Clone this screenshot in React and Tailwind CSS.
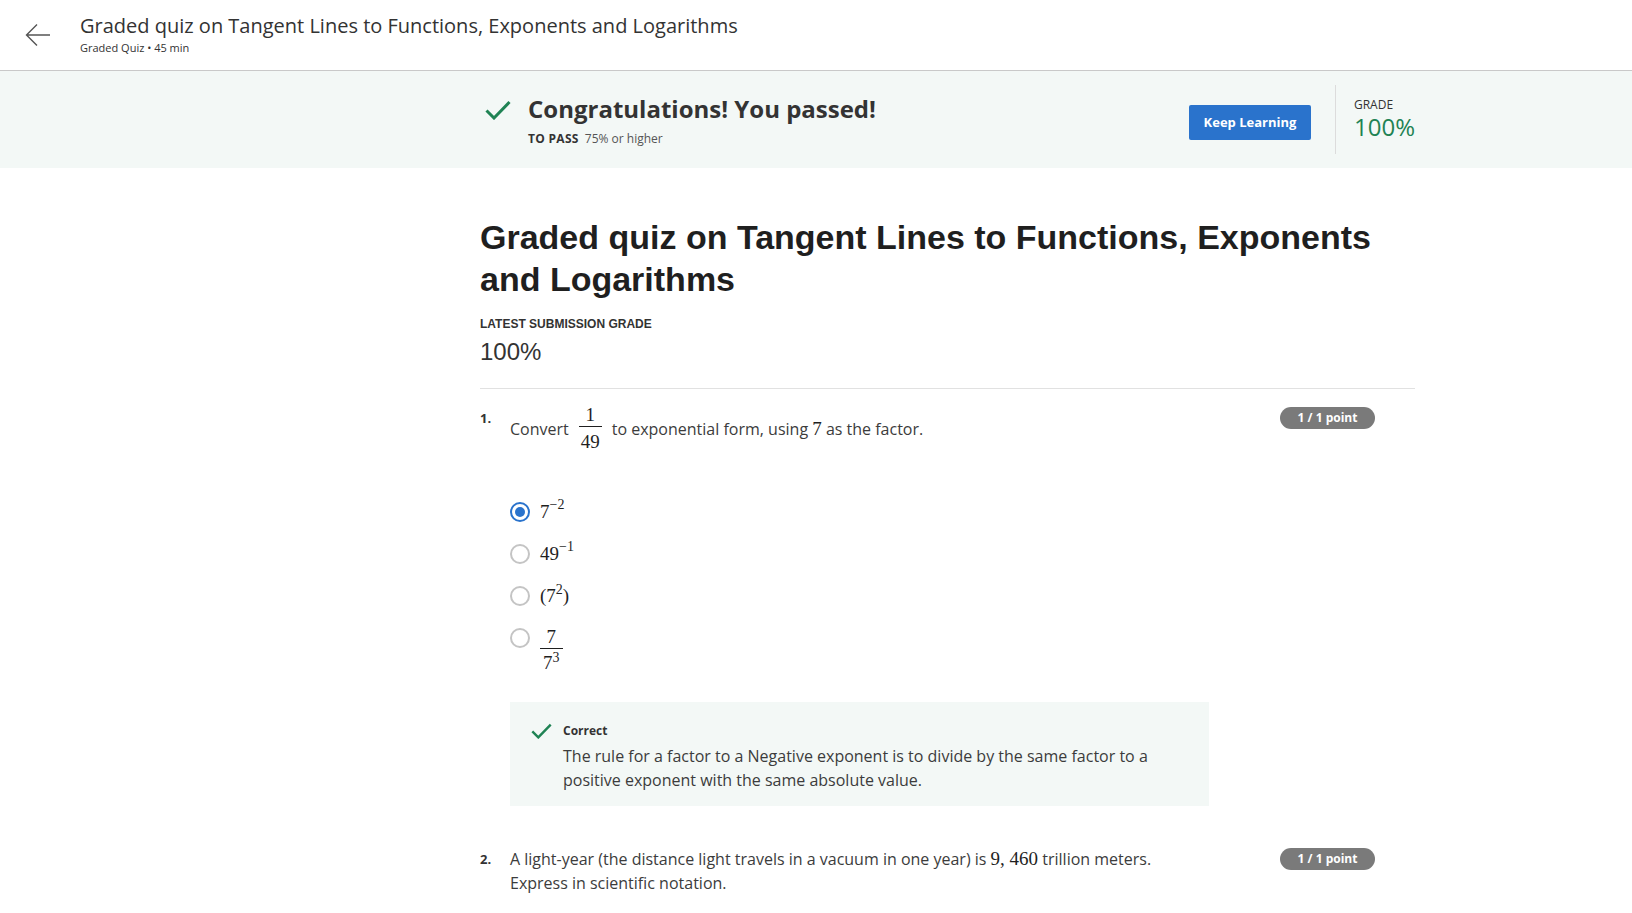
import React from 'react';

const sans = { fontFamily: '"Open Sans", "Noto Sans", sans-serif' };

const Frac = ({ top, bottom }) => (
  <span className="inline-flex flex-col items-center font-['Liberation_Serif',serif] text-[19px] leading-[22px] text-[#1f1f1f] mx-[10px]">
    <span className="px-[2px]">{top}</span>
    <span className="px-[2px] border-t border-[#1f1f1f] pt-[4px]">{bottom}</span>
  </span>
);

const Math = ({ children }) => (
  <span className="font-['Liberation_Serif',serif] text-[19px] leading-[20px] text-[#1f1f1f]">{children}</span>
);

const Badge = () => (
  <span className="h-[22px] w-[95px] rounded-full bg-[#7a7a7a] text-white text-[12px] font-bold flex items-center justify-center shrink-0">
    1 / 1 point
  </span>
);

const Radio = ({ checked }) =>
  checked ? (
    <span className="w-[20px] h-[20px] rounded-full border-2 border-[#2a73cc] flex items-center justify-center shrink-0">
      <span className="w-[10px] h-[10px] rounded-full bg-[#2a73cc]" />
    </span>
  ) : (
    <span className="w-[20px] h-[20px] rounded-full border-2 border-[#c4c4c4] shrink-0" />
  );

const Check = ({ className }) => (
  <svg viewBox="0 0 26 20" className={className} fill="none" stroke="#1f8354" strokeWidth="3">
    <path d="M1.5 10.5 L9 18 L24.5 2" />
  </svg>
);

const options = [
  { checked: true, body: <Math>7<sup className="text-[14px] -top-[9px]">−2</sup></Math> },
  { body: <Math>49<sup className="text-[14px] -top-[9px]">−1</sup></Math> },
  { body: <Math>(7<sup className="text-[14px] -top-[8px]">2</sup>)</Math> },
  {
    body: (
      <span className="mt-[24px] inline-flex flex-col items-center font-['Liberation_Serif',serif] text-[19px] leading-[22px] text-[#1f1f1f]">
        <span className="px-[3px]">7</span>
        <span className="px-[3px] border-t-[1.5px] border-[#1f1f1f] pt-[3px]">7<sup className="text-[14px] -top-[7px]">3</sup></span>
      </span>
    ),
  },
];

export default function App() {
  return (
    <div className="min-h-screen bg-white text-[#333]" style={sans}>
      {/* top bar */}
      <div className="h-[71px] border-b border-[#c9c9c9] flex items-start">
        <div className="pl-[25px] pt-[23px] w-[80px] shrink-0">
          <svg viewBox="0 0 26 24" className="w-[26px] h-[24px]" fill="none" stroke="#555" strokeWidth="1.4">
            <path d="M25 12 H2 M12 1.5 L1.5 12 L12 22.5" />
          </svg>
        </div>
        <div className="pt-[12px]">
          <div className="text-[20px] leading-[28px] text-[#333]">
            Graded quiz on Tangent Lines to Functions, Exponents and Logarithms
          </div>
          <div className="text-[11px] leading-[16px] text-[#333]">Graded Quiz • 45 min</div>
        </div>
      </div>

      {/* result banner */}
      <div className="h-[97px] bg-[#f3f8f6]">
        <div className="ml-[480px] w-[935px] h-full flex items-center">
          <div className="flex items-start pt-[2px]">
            <Check className="w-[26px] h-[20px] mt-[7px] ml-[5px] mr-[17px]" />
            <div>
              <div className="text-[24px] leading-[32px] font-bold text-[#333]">Congratulations! You passed!</div>
              <div className="text-[12px] leading-[18px] mt-[5px] text-[#333]">
                <span className="font-bold tracking-[0.3px]">TO PASS</span>
                <span className="ml-[6px] text-[#555]">75% or higher</span>
              </div>
            </div>
          </div>
          <div className="flex-1" />
          <button className="mt-[6px] w-[122px] h-[35px] bg-[#2a73cc] rounded-[2px] text-white text-[13px] font-bold">
            Keep Learning
          </button>
          <div className="w-px h-[69px] bg-[#dcdcdc] ml-[24px] mr-[18px]" />
          <div className="pb-[2px]">
            <div className="text-[12px] leading-[16px] text-[#333]">GRADE</div>
            <div className="text-[24px] leading-[28px] text-[#1f8354]">100%</div>
          </div>
        </div>
      </div>

      {/* main */}
      <div className="ml-[480px] w-[935px] pt-[48px]">
        <h1 className="font-['Liberation_Sans',Arial,sans-serif] text-[34px] leading-[42px] font-bold text-[#1f1f1f]">
          Graded quiz on Tangent Lines to Functions, Exponents and Logarithms
        </h1>
        <div className="mt-[16px] font-['Liberation_Sans',Arial,sans-serif] text-[12px] leading-[16px] font-bold text-[#333]">
          LATEST SUBMISSION GRADE
        </div>
        <div className="mt-[4px] font-['Liberation_Sans',Arial,sans-serif] text-[24px] leading-[32px] text-[#333]">100%</div>
        <div className="mt-[20px] border-t border-[#e1e1e1]" />

        {/* question 1 */}
        <div className="mt-[15px] pr-[40px] flex items-start">
          <div className="w-[30px] shrink-0 text-[13px] font-bold leading-[20px] pt-[4px] text-[#333]">1.</div>
          <div className="flex-1">
            <div className="flex items-center text-[16px] text-[#3c3c3c]">
              <span>Convert</span>
              <Frac top="1" bottom="49" />
              <span>
                to exponential form, using <Math>7</Math> as the factor.
              </span>
            </div>
          </div>
          <div className="pt-[3px]">
            <Badge />
          </div>
        </div>

        <div className="ml-[30px] mt-[38px] flex flex-col">
          {options.map((o, i) => (
            <div key={i} className="h-[42px] flex items-center">
              <Radio checked={o.checked} />
              <span className="ml-[10px] flex">{o.body}</span>
            </div>
          ))}
        </div>

        <div className="ml-[30px] mt-[43px] w-[699px] bg-[#f3f8f6] pt-[20px] pb-[14px] pl-[21px] pr-[20px]">
          <div className="flex items-center">
            <Check className="w-[21px] h-[16px] mr-[11px]" />
            <span className="text-[12px] font-bold text-[#333]">Correct</span>
          </div>
          <div className="ml-[32px] mt-[4px] text-[16px] leading-[24px] text-[#3c3c3c]">
            The rule for a factor to a Negative exponent is to divide by the same factor to a positive exponent with the
            same absolute value.
          </div>
        </div>

        {/* question 2 */}
        <div className="mt-[41px] pr-[40px] flex items-start">
          <div className="w-[30px] shrink-0 text-[13px] font-bold leading-[24px] text-[#333]">2.</div>
          <div className="flex-1 text-[16px] leading-[24px] text-[#3c3c3c] pr-[80px]">
            A light-year (the distance light travels in a vacuum in one year) is <Math>9, 460</Math> trillion meters.
            Express in scientific notation.
          </div>
          <div className="pt-[1px]">
            <Badge />
          </div>
        </div>
        <div className="h-[40px]" />
      </div>
    </div>
  );
}
